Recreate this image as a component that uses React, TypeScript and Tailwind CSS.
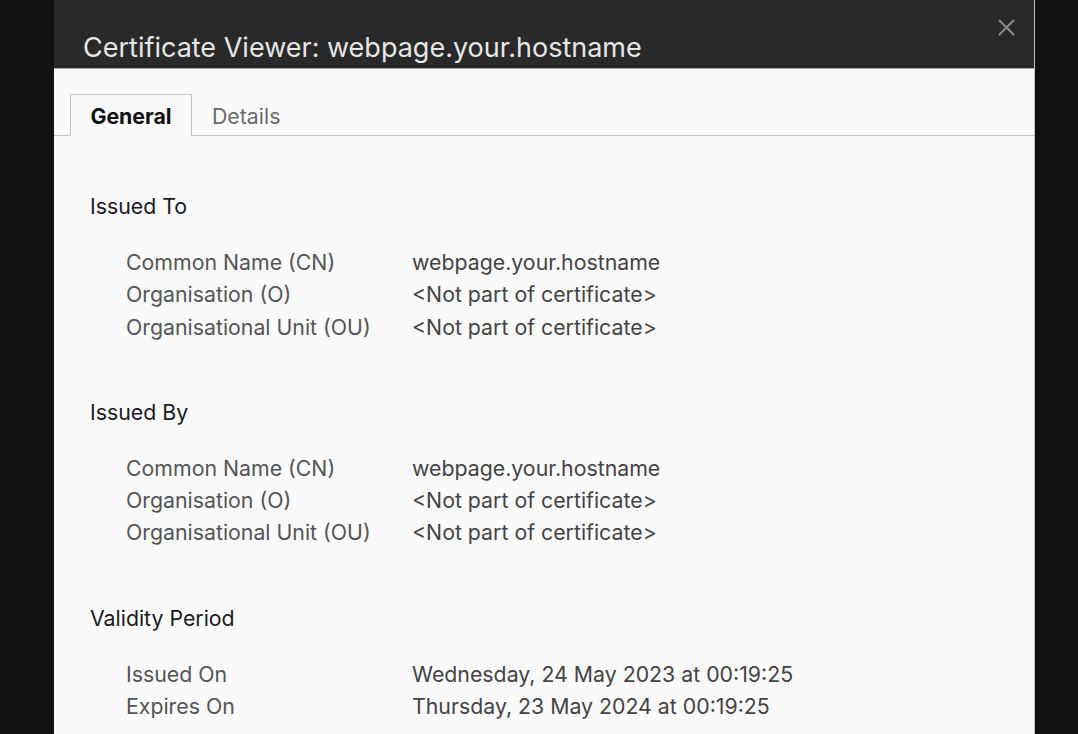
const sections = [
  {
    title: "Issued To",
    rows: [
      ["Common Name (CN)", "webpage.your.hostname"],
      ["Organisation (O)", "<Not part of certificate>"],
      ["Organisational Unit (OU)", "<Not part of certificate>"],
    ],
  },
  {
    title: "Issued By",
    rows: [
      ["Common Name (CN)", "webpage.your.hostname"],
      ["Organisation (O)", "<Not part of certificate>"],
      ["Organisational Unit (OU)", "<Not part of certificate>"],
    ],
  },
  {
    title: "Validity Period",
    rows: [
      ["Issued On", "Wednesday, 24 May 2023 at 00:19:25"],
      ["Expires On", "Thursday, 23 May 2024 at 00:19:25"],
    ],
  },
];

export default function App() {
  return (
    <div
      className="flex h-[734px] w-[1078px] overflow-hidden bg-[#111111] pl-[54px] pr-[43px]"
      style={{ fontFamily: "Inter, 'Noto Sans', sans-serif" }}
    >
      <div className="flex flex-1 flex-col border-r border-[#bdbdbd] bg-[#fafafa]">
        <div className="relative h-[69px] shrink-0 border-b border-[#a8a8a8] bg-[#292929] pl-[29px] pt-[30px]">
          <h1 className="text-[27px] leading-[36px] text-[#e6e6e6]">
            Certificate Viewer: webpage.your.hostname
          </h1>
          <button className="absolute right-[19px] top-[19px] text-[#8c8c8c]">
            <svg width="17" height="17" viewBox="0 0 17 17" stroke="currentColor" strokeWidth="2" strokeLinecap="round">
              <path d="M1.5 1.5 L15.5 15.5 M15.5 1.5 L1.5 15.5" />
            </svg>
          </button>
        </div>

        <div className="mt-[25px] flex h-[42px] items-end border-b border-[#c4c4c4] pl-[16px]">
          <div className="-mb-px flex h-[42px] w-[122px] items-center justify-center border border-b-0 border-[#c4c4c4] bg-[#fafafa] pt-[2px] text-[21.3px] font-bold text-[#111]">
            General
          </div>
          <div className="flex h-[42px] items-center pl-[20px] pt-[5px] text-[21.3px] text-[#6b6b6b]">Details</div>
        </div>

        <div className="flex flex-col gap-[53px] pl-[36px] pt-[54px]">
          {sections.map((s) => (
            <div key={s.title}>
              <h2 className="text-[21.3px] leading-[32px] text-[#1a1a1a]">{s.title}</h2>
              <div className="mt-[24px] flex flex-col pl-[36px]">
                {s.rows.map(([k, v]) => (
                  <div key={k} className="flex text-[21.3px] leading-[32.3px] text-[#555]">
                    <span className="w-[286px] shrink-0">{k}</span>
                    <span className="text-[#444]">{v}</span>
                  </div>
                ))}
              </div>
            </div>
          ))}
        </div>
      </div>
    </div>
  );
}
